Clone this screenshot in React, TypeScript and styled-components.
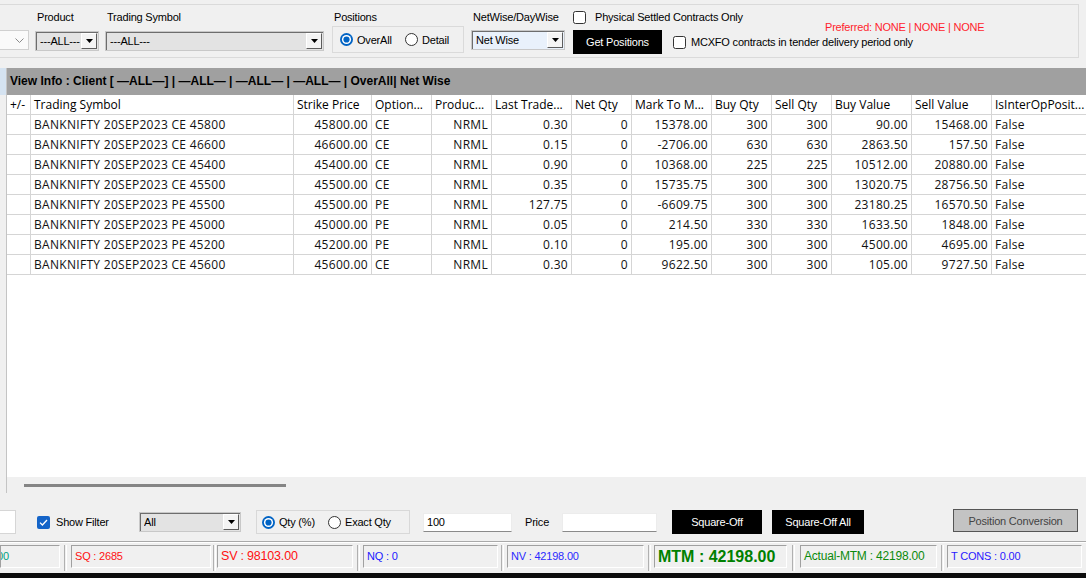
import React from 'react';
import styled, { createGlobalStyle } from 'styled-components';

const GlobalStyle = createGlobalStyle`
  html, body { margin: 0; padding: 0; background: #f0f0f0; }
  body { width: 1086px; height: 578px; overflow: hidden; }
  * { box-sizing: border-box; }
`;

const Screen = styled.div`
  width: 1086px;
  height: 578px;
  display: flex;
  flex-direction: column;
  background: #f0f0f0;
  overflow: hidden;
  font-family: "Liberation Sans", Arial, sans-serif;
  font-size: 11px;
  letter-spacing: -0.2px;
  color: #000;
`;

/* ---------- top filter panel ---------- */
const TopPanel = styled.div`
  flex: none;
  height: 68px;
  padding-top: 4px;
`;

const FilterGroup = styled.div`
  width: 1079px;
  height: 54px;
  border: 1px solid #dadada;
  border-left: none;
  display: flex;
  align-items: flex-start;
  padding-top: 6px;
`;

const FieldColumn = styled.div<{ $w: number; $ml: number }>`
  flex: none;
  width: ${(p) => p.$w}px;
  margin-left: ${(p) => p.$ml}px;
  display: flex;
  flex-direction: column;
`;

const FieldLabel = styled.div`
  height: 13px;
  line-height: 13px;
  padding-left: 2px;
  margin-bottom: 6px;
  white-space: nowrap;
`;

const ModernSelect = styled.div`
  margin-top: 19px;
  height: 20px;
  border: 1px solid #d0d0d0;
  border-left: none;
  background: #fafafa;
  display: flex;
  justify-content: flex-end;
  align-items: center;
  padding-right: 4px;
`;

const ClassicSelect = styled.div<{ $bg: string; $mt?: number }>`
  height: 20px;
  margin-top: ${(p) => p.$mt ?? 0}px;
  border: 1px solid;
  border-color: #a0a0a0 #ffffff #ffffff #a0a0a0;
  box-shadow: inset 1px 1px 0 #6d6d6d;
  outline: 1px solid #c8c8c8;
  outline-offset: -1px;
  background: ${(p) => p.$bg};
  display: flex;
  align-items: center;
  padding: 0 1px 0 4px;
`;

const SelectText = styled.span`
  flex: 1;
  white-space: nowrap;
  overflow: hidden;
  line-height: 16px;
`;

const ArrowButton = styled.span`
  flex: none;
  width: 16px;
  height: 16px;
  background: #f4f4f4;
  border: 1px solid;
  border-color: #ffffff #5c5c5c #5c5c5c #ffffff;
  display: flex;
  align-items: center;
  justify-content: center;
`;

const GroupBox = styled.div`
  margin-top: -4px;
  height: 27px;
  border: 1px solid #dadada;
  display: flex;
  align-items: center;
  padding-left: 7px;
`;

const RadioOption = styled.label<{ $w?: number }>`
  display: flex;
  align-items: center;
  gap: 4px;
  white-space: nowrap;
  ${(p) => (p.$w ? `width: ${p.$w}px; flex: none;` : '')}
`;

const RightSection = styled.div`
  margin-left: 8px;
  display: flex;
  flex-direction: column;
`;

const RightTopRow = styled.div`
  display: grid;
  grid-template-columns: 252px auto;
  height: 13px;
  align-items: start;
`;

const CheckLabel = styled.label<{ $gap: number }>`
  display: flex;
  align-items: center;
  gap: ${(p) => p.$gap}px;
  white-space: nowrap;
  line-height: 13px;
`;

const PreferredText = styled.div`
  margin-top: 10px;
  color: #ff1e2d;
  white-space: nowrap;
  line-height: 13px;
`;

const RightBottomRow = styled.div`
  margin-top: 6px;
  display: flex;
  align-items: center;
  gap: 11px;
`;

const BlackButton = styled.button<{ $w: number; $ml?: number }>`
  flex: none;
  width: ${(p) => p.$w}px;
  height: 24px;
  margin-left: ${(p) => p.$ml ?? 0}px;
  background: #000;
  color: #fff;
  border: none;
  padding: 0;
  font-family: "Liberation Sans", Arial, sans-serif;
  font-size: 11px;
  letter-spacing: -0.2px;
  cursor: default;
`;

/* ---------- main grid ---------- */
const MainArea = styled.div`
  flex: none;
  height: 425px;
  display: flex;
`;

const LeftStrip = styled.div`
  flex: none;
  width: 7px;
  display: flex;
  flex-direction: column;
`;

const StripTint = styled.div`
  height: 27px;
  background: #d5e3f1;
  border-right: 1px solid #c4c4c4;
`;

const StripBody = styled.div`
  flex: 1;
  width: 7px;
  border-right: 1px solid #c4c4c4;
`;

const GridColumn = styled.div`
  flex: 1;
  min-width: 0;
  display: flex;
  flex-direction: column;
  overflow: hidden;
`;

const ViewInfoBar = styled.div`
  flex: none;
  height: 27px;
  line-height: 27px;
  background: #a0a0a0;
  padding-left: 3px;
  font-weight: bold;
  font-size: 12px;
  letter-spacing: 0;
  white-space: nowrap;
`;

const TableArea = styled.div`
  flex: 1;
  background: #fff;
  overflow: hidden;
`;

const DataGrid = styled.div`
  display: grid;
  grid-template-columns: 24px 263px 78px 60px 60px 80px 60px 80px 60px 60px 80px 80px 130px;
  grid-auto-rows: 20px;
  font-family: "Open Sans", "Noto Sans", sans-serif;
  font-size: 12px;
  letter-spacing: 0;
  color: #111;
`;

const Cell = styled.div<{ $right?: boolean }>`
  border-right: 1px solid #d5d5d5;
  border-bottom: 1px solid #d5d5d5;
  padding: 0 3px;
  line-height: 19px;
  white-space: nowrap;
  overflow: hidden;
  letter-spacing: 0.3px;
  text-align: ${(p) => (p.$right ? 'right' : 'left')};
`;

const HeadCell = styled(Cell)`
  color: #000;
  letter-spacing: 0;
`;

const ScrollTrack = styled.div`
  flex: none;
  height: 16px;
  padding: 7px 0 0 17px;
`;

const ScrollThumb = styled.div`
  width: 262px;
  height: 3px;
  background: #858585;
`;

/* ---------- bottom controls ---------- */
const ControlsRow = styled.div`
  flex: none;
  height: 48px;
  padding-top: 10px;
  display: flex;
  align-items: center;
`;

const PartialInput = styled.div`
  flex: none;
  width: 16px;
  height: 24px;
  background: #fff;
  border: 1px solid #d6d6d6;
  border-left: none;
`;

const ShowFilterField = styled(CheckLabel)`
  flex: none;
  width: 102px;
  margin-left: 21px;
`;

const FilterSelectWrap = styled.div`
  flex: none;
  width: 102px;
`;

const QtyGroup = styled.div`
  flex: none;
  width: 154px;
  height: 24px;
  margin-left: 15px;
  border: 1px solid #d8d8d8;
  display: flex;
  align-items: center;
  padding-left: 5px;
`;

const TextInput = styled.div<{ $w: number; $ml: number }>`
  flex: none;
  width: ${(p) => p.$w}px;
  height: 19px;
  margin-left: ${(p) => p.$ml}px;
  background: #fff;
  border: 1px solid #ececec;
  border-bottom-color: #8a8a8a;
  padding-left: 3px;
  line-height: 17px;
`;

const PriceLabel = styled.div`
  flex: none;
  width: 50px;
  padding-left: 13px;
`;

const GreyButton = styled.button`
  flex: none;
  width: 125px;
  height: 23px;
  margin-left: 89px;
  margin-top: -3px;
  background: #c3c3c3;
  border: 1px solid #555;
  color: #444;
  padding: 0;
  font-family: "Liberation Sans", Arial, sans-serif;
  font-size: 11px;
  letter-spacing: -0.2px;
  cursor: default;
`;

/* ---------- status bar ---------- */
const StatusBar = styled.div`
  flex: none;
  height: 32px;
  border-top: 1px solid #a9a9a9;
  box-shadow: inset 0 1px 0 #ffffff;
  padding-top: 3px;
  display: flex;
  overflow: hidden;
`;

const StatusCell = styled.div<{ $w: number; $color: string; $size?: number; $bold?: boolean }>`
  flex: none;
  width: ${(p) => p.$w}px;
  height: 23px;
  border: 1px solid;
  border-color: #a0a0a0 #ffffff #ffffff #a0a0a0;
  padding-left: 3px;
  line-height: 21px;
  white-space: nowrap;
  overflow: hidden;
  color: ${(p) => p.$color};
  font-size: ${(p) => p.$size ?? 11}px;
  font-weight: ${(p) => (p.$bold ? 'bold' : 'normal')};
  letter-spacing: ${(p) => (p.$bold ? '0' : '-0.2px')};
`;

const FirstStatusText = styled.span`
  display: inline-block;
  margin-left: -7px;
`;

const StatusSep = styled.div<{ $w: number }>`
  flex: none;
  width: ${(p) => p.$w}px;
  height: 26px;
  display: flex;
  justify-content: center;
  &::before {
    content: '';
    width: 1px;
    border-left: 1px solid #b0b0b0;
    border-right: 1px solid #ffffff;
  }
`;

const Taskbar = styled.div`
  flex: none;
  height: 5px;
  background: #0c0c0c;
`;

/* ---------- icons ---------- */
const Triangle = () => (
  <svg width="7" height="4" viewBox="0 0 7 4">
    <polygon points="0,0 7,0 3.5,4" fill="#000" />
  </svg>
);

const Chevron = () => (
  <svg width="9" height="5" viewBox="0 0 9 5">
    <polyline points="0.5,0.5 4.5,4.5 8.5,0.5" fill="none" stroke="#8a8a8a" strokeWidth="1" />
  </svg>
);

const RadioIcon = ({ checked }: { checked?: boolean }) => (
  <svg width="13" height="13" viewBox="0 0 13 13">
    {checked ? (
      <>
        <circle cx="6.5" cy="6.5" r="6.5" fill="#0063c4" />
        <circle cx="6.5" cy="6.5" r="4.6" fill="#ffffff" />
        <circle cx="6.5" cy="6.5" r="3.1" fill="#0063c4" />
      </>
    ) : (
      <circle cx="6.5" cy="6.5" r="6" fill="#ffffff" stroke="#333" strokeWidth="1" />
    )}
  </svg>
);

const CheckIcon = ({ checked }: { checked?: boolean }) => (
  <svg width="13" height="13" viewBox="0 0 13 13">
    {checked ? (
      <>
        <rect x="0" y="0" width="13" height="13" rx="2" fill="#1464c8" />
        <polyline points="3,6.6 5.4,9 10,4" fill="none" stroke="#fff" strokeWidth="1.3" />
      </>
    ) : (
      <rect x="0.5" y="0.5" width="12" height="12" rx="2" fill="#fff" stroke="#333" strokeWidth="1" />
    )}
  </svg>
);

const Select = ({ text, bg, mt }: { text: string; bg: string; mt?: number }) => (
  <ClassicSelect $bg={bg} $mt={mt}>
    <SelectText>{text}</SelectText>
    <ArrowButton>
      <Triangle />
    </ArrowButton>
  </ClassicSelect>
);

/* ---------- data ---------- */
const headers: string[] = [
  '+/-',
  'Trading Symbol',
  'Strike Price',
  'Option...',
  'Produc...',
  'Last Trade...',
  'Net Qty',
  'Mark To M...',
  'Buy Qty',
  'Sell Qty',
  'Buy Value',
  'Sell Value',
  'IsInterOpPosit...',
];

const rightAligned = [false, false, true, false, true, true, true, true, true, true, true, true, false];

const rows: string[][] = [
  ['', 'BANKNIFTY 20SEP2023 CE 45800', '45800.00', 'CE', 'NRML', '0.30', '0', '15378.00', '300', '300', '90.00', '15468.00', 'False'],
  ['', 'BANKNIFTY 20SEP2023 CE 46600', '46600.00', 'CE', 'NRML', '0.15', '0', '-2706.00', '630', '630', '2863.50', '157.50', 'False'],
  ['', 'BANKNIFTY 20SEP2023 CE 45400', '45400.00', 'CE', 'NRML', '0.90', '0', '10368.00', '225', '225', '10512.00', '20880.00', 'False'],
  ['', 'BANKNIFTY 20SEP2023 CE 45500', '45500.00', 'CE', 'NRML', '0.35', '0', '15735.75', '300', '300', '13020.75', '28756.50', 'False'],
  ['', 'BANKNIFTY 20SEP2023 PE 45500', '45500.00', 'PE', 'NRML', '127.75', '0', '-6609.75', '300', '300', '23180.25', '16570.50', 'False'],
  ['', 'BANKNIFTY 20SEP2023 PE 45000', '45000.00', 'PE', 'NRML', '0.05', '0', '214.50', '330', '330', '1633.50', '1848.00', 'False'],
  ['', 'BANKNIFTY 20SEP2023 PE 45200', '45200.00', 'PE', 'NRML', '0.10', '0', '195.00', '300', '300', '4500.00', '4695.00', 'False'],
  ['', 'BANKNIFTY 20SEP2023 CE 45600', '45600.00', 'CE', 'NRML', '0.30', '0', '9622.50', '300', '300', '105.00', '9727.50', 'False'],
];

export default function App() {
  return (
    <Screen>
      <GlobalStyle />
      <TopPanel>
        <FilterGroup>
          <FieldColumn $w={29} $ml={0}>
            <ModernSelect>
              <Chevron />
            </ModernSelect>
          </FieldColumn>
          <FieldColumn $w={64} $ml={6}>
            <FieldLabel>Product</FieldLabel>
            <Select text="---ALL---" bg="#e3e3e3" mt={1} />
          </FieldColumn>
          <FieldColumn $w={219} $ml={6}>
            <FieldLabel>Trading Symbol</FieldLabel>
            <Select text="---ALL---" bg="#e3e3e3" mt={1} />
          </FieldColumn>
          <FieldColumn $w={132} $ml={8}>
            <FieldLabel>Positions</FieldLabel>
            <GroupBox>
              <RadioOption $w={65}>
                <RadioIcon checked />
                OverAll
              </RadioOption>
              <RadioOption>
                <RadioIcon />
                Detail
              </RadioOption>
            </GroupBox>
          </FieldColumn>
          <FieldColumn $w={94} $ml={7}>
            <FieldLabel>NetWise/DayWise</FieldLabel>
            <Select text="Net Wise" bg="#e9f1fb" />
          </FieldColumn>
          <RightSection>
            <RightTopRow>
              <CheckLabel $gap={9}>
                <CheckIcon />
                Physical Settled Contracts Only
              </CheckLabel>
              <PreferredText>Preferred: NONE | NONE | NONE</PreferredText>
            </RightTopRow>
            <RightBottomRow>
              <BlackButton $w={89}>Get Positions</BlackButton>
              <CheckLabel $gap={5}>
                <CheckIcon />
                MCXFO contracts in tender delivery period only
              </CheckLabel>
            </RightBottomRow>
          </RightSection>
        </FilterGroup>
      </TopPanel>

      <MainArea>
        <LeftStrip>
          <StripTint />
          <StripBody />
        </LeftStrip>
        <GridColumn>
          <ViewInfoBar>
            View Info : Client [ —ALL—] | —ALL— | —ALL— | —ALL— | OverAll| Net Wise
          </ViewInfoBar>
          <TableArea>
            <DataGrid>
              {headers.map((h) => (
                <HeadCell key={h}>{h}</HeadCell>
              ))}
              {rows.map((r, ri) =>
                r.map((v, ci) => (
                  <Cell key={`${ri}-${ci}`} $right={rightAligned[ci]}>
                    {v}
                  </Cell>
                ))
              )}
            </DataGrid>
          </TableArea>
          <ScrollTrack>
            <ScrollThumb />
          </ScrollTrack>
        </GridColumn>
      </MainArea>

      <ControlsRow>
        <PartialInput />
        <ShowFilterField $gap={6}>
          <CheckIcon checked />
          Show Filter
        </ShowFilterField>
        <FilterSelectWrap>
          <Select text="All" bg="#e3e3e3" />
        </FilterSelectWrap>
        <QtyGroup>
          <RadioOption $w={66}>
            <RadioIcon checked />
            Qty (%)
          </RadioOption>
          <RadioOption>
            <RadioIcon />
            Exact Qty
          </RadioOption>
        </QtyGroup>
        <TextInput $w={89} $ml={13}>100</TextInput>
        <PriceLabel>Price</PriceLabel>
        <TextInput $w={95} $ml={0} />
        <BlackButton $w={90} $ml={15}>Square-Off</BlackButton>
        <BlackButton $w={92} $ml={10}>Square-Off All</BlackButton>
        <GreyButton>Position Conversion</GreyButton>
      </ControlsRow>

      <StatusBar>
        <StatusCell $w={60} $color="#00a080">
          <FirstStatusText>00</FirstStatusText>
        </StatusCell>
        <StatusSep $w={11} />
        <StatusCell $w={140} $color="#ff1010">SQ : 2685</StatusCell>
        <StatusSep $w={6} />
        <StatusCell $w={136} $color="#ff1010" $size={12.5}>SV : 98103.00</StatusCell>
        <StatusSep $w={10} />
        <StatusCell $w={135} $color="#1a1aff">NQ : 0</StatusCell>
        <StatusSep $w={9} />
        <StatusCell $w={137} $color="#2a2aff">NV : 42198.00</StatusCell>
        <StatusSep $w={10} />
        <StatusCell $w={133} $color="#008000" $size={16} $bold>MTM : 42198.00</StatusCell>
        <StatusSep $w={13} />
        <StatusCell $w={137} $color="#0b8a0b" $size={12}>Actual-MTM : 42198.00</StatusCell>
        <StatusSep $w={10} />
        <StatusCell $w={135} $color="#2a1aff">T CONS : 0.00</StatusCell>
      </StatusBar>
      <Taskbar />
    </Screen>
  );
}
